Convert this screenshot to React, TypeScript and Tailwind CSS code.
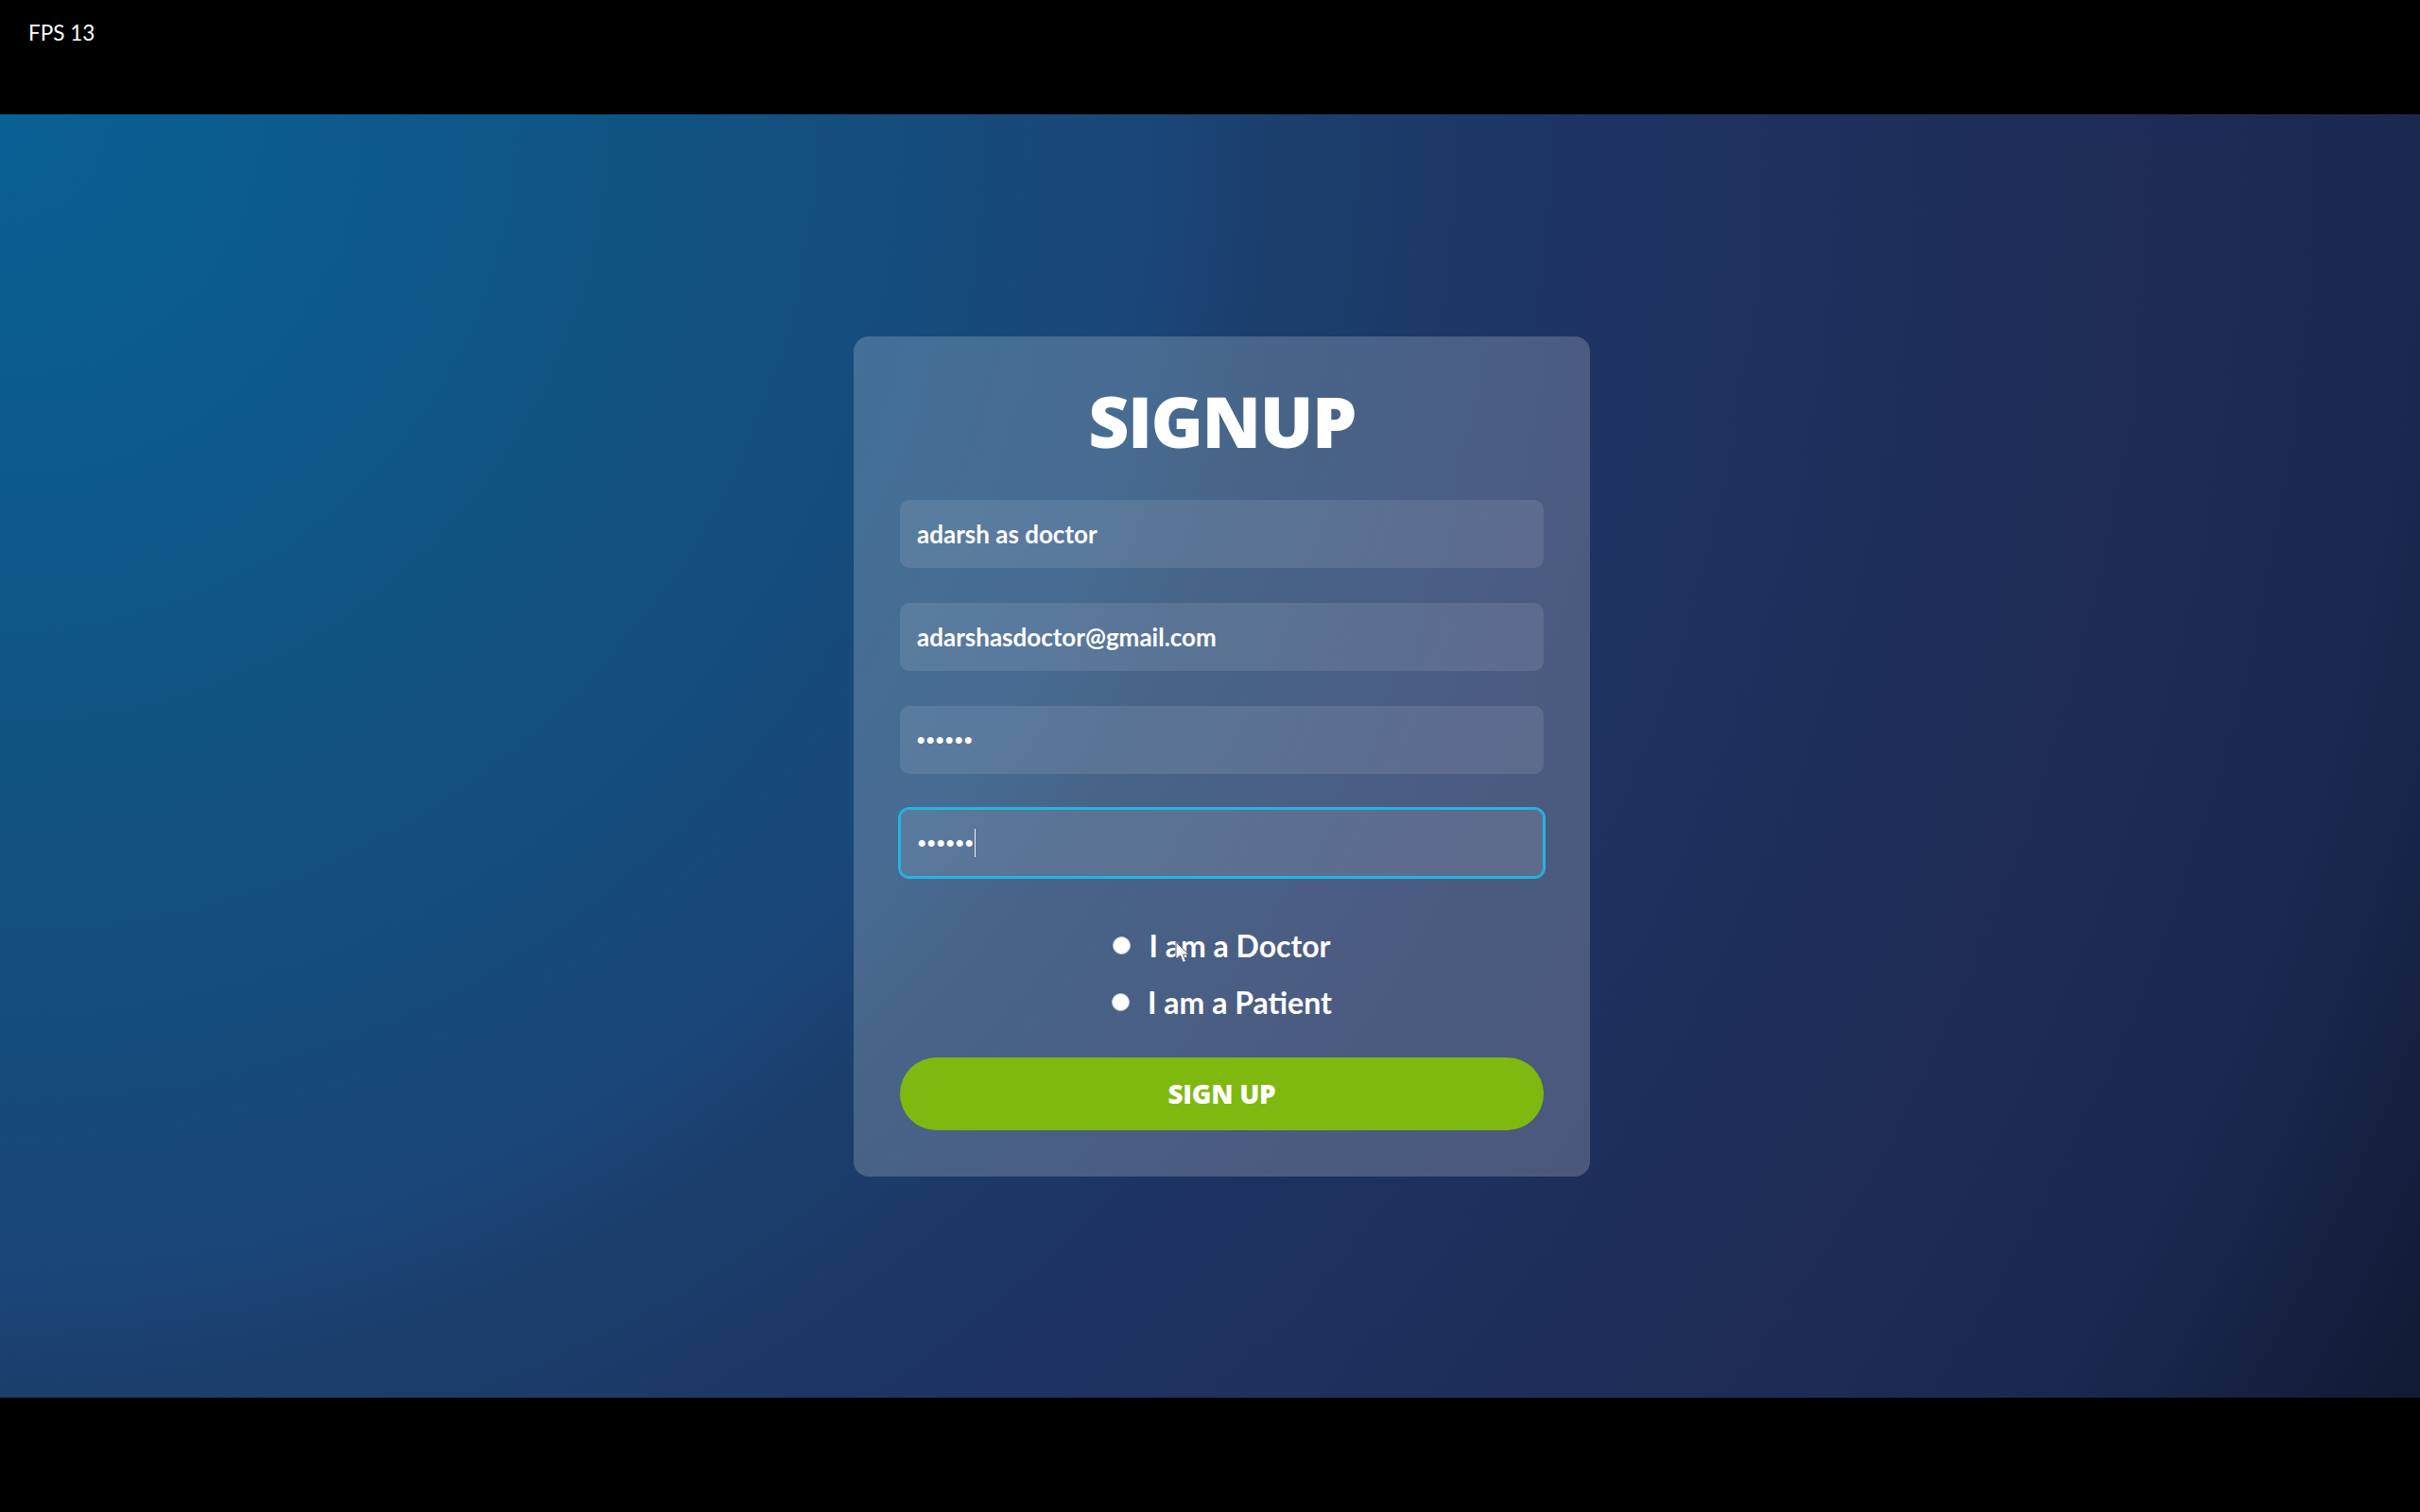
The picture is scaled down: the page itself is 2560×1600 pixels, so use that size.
import { useState } from 'react';

const Field = ({ value, secret, focused }: { value: string; secret?: boolean; focused?: boolean }) => {
    return (
        <div
            className={
                focused
                    ? "h-[72px] flex items-center px-[18px] rounded-[10px] bg-white/10 border border-[#25b4e4] ring-2 ring-[#25b4e4]"
                    : "h-[72px] flex items-center px-[18px] rounded-[10px] bg-white/10"
            }
        >
            {secret ? (
                <span className="text-white text-[24px] font-bold leading-none tracking-[1.6px] font-['Liberation_Sans',sans-serif]">
                    {value}
                </span>
            ) : (
                <span className="text-white text-[26px] font-bold leading-none">{value}</span>
            )}
            {focused && <span className="w-[1px] h-[30px] bg-white/90" />}
        </div>
    );
};

const App = () => {
    const [role, setRole] = useState("");

    return (
        <div className="h-screen flex flex-col font-['Lato',sans-serif]">
            <div className="h-[121px] bg-black pl-[30px] pt-[24px]">
                <span className="text-white text-[22.5px] leading-none">FPS 13</span>
            </div>

            <div className="flex-1 flex items-center justify-center pl-[25px] bg-[radial-gradient(circle_at_0%_0%,#0a6195_0px,#0f5585_600px,#1a4677_1230px,#1b3e6c_1360px,#1e3362_1700px,#1e2c58_2200px,#1b2850_2560px,#111a33_2900px)]">
                <div className="w-[779px] rounded-[16px] bg-white/20 px-[49px] pt-[52px] pb-[49px] flex flex-col">
                    <h1 className="text-white text-[75px] font-extrabold leading-none text-center tracking-[-1.5px] font-['Open_Sans',sans-serif]">
                        SIGNUP
                    </h1>

                    <div className="mt-[46px] flex flex-col gap-[37px]">
                        <Field value="adarsh as doctor" />
                        <Field value="adarshasdoctor@gmail.com" />
                        <Field value="••••••" secret />
                        <Field value="••••••" secret focused />
                    </div>

                    <div className="mt-[55px] flex flex-col gap-[24px]">
                        <div
                            className="h-[36px] flex items-center justify-center gap-[19px] cursor-pointer"
                            onClick={() => setRole("doctor")}
                        >
                            <span className="w-[19px] h-[19px] rounded-full bg-white border border-[#c8cdd6] flex items-center justify-center">
                                {role === "doctor" && <span className="w-[9px] h-[9px] rounded-full bg-[#0078d4]" />}
                            </span>
                            <span className="relative text-white text-[32px] font-bold leading-[36px]">
                                I am a Doctor
                                <svg
                                    className="absolute left-[28px] top-[13px]"
                                    width="17"
                                    height="25"
                                    viewBox="0 0 17 25"
                                >
                                    <path
                                        d="M1 1 L1 19 L5.5 15 L8.5 22.5 L11.5 21.2 L8.6 14 L14.5 14 Z"
                                        fill="#ffffff"
                                        stroke="#4a5570"
                                        strokeWidth="1"
                                        strokeLinejoin="round"
                                    />
                                </svg>
                            </span>
                        </div>
                        <div
                            className="h-[36px] flex items-center justify-center gap-[19px] cursor-pointer"
                            onClick={() => setRole("patient")}
                        >
                            <span className="w-[19px] h-[19px] rounded-full bg-white border border-[#c8cdd6] flex items-center justify-center">
                                {role === "patient" && <span className="w-[9px] h-[9px] rounded-full bg-[#0078d4]" />}
                            </span>
                            <span className="text-white text-[32px] font-bold leading-[36px]">I am a Patient</span>
                        </div>
                    </div>

                    <button
                        type="button"
                        className="mt-[40px] h-[77px] rounded-full bg-[#7fb80e] text-white text-[28px] font-extrabold tracking-[-0.3px] font-['Open_Sans',sans-serif]"
                    >
                        SIGN UP
                    </button>
                </div>
            </div>

            <div className="h-[121px] bg-black" />
        </div>
    );
};

export default App;
